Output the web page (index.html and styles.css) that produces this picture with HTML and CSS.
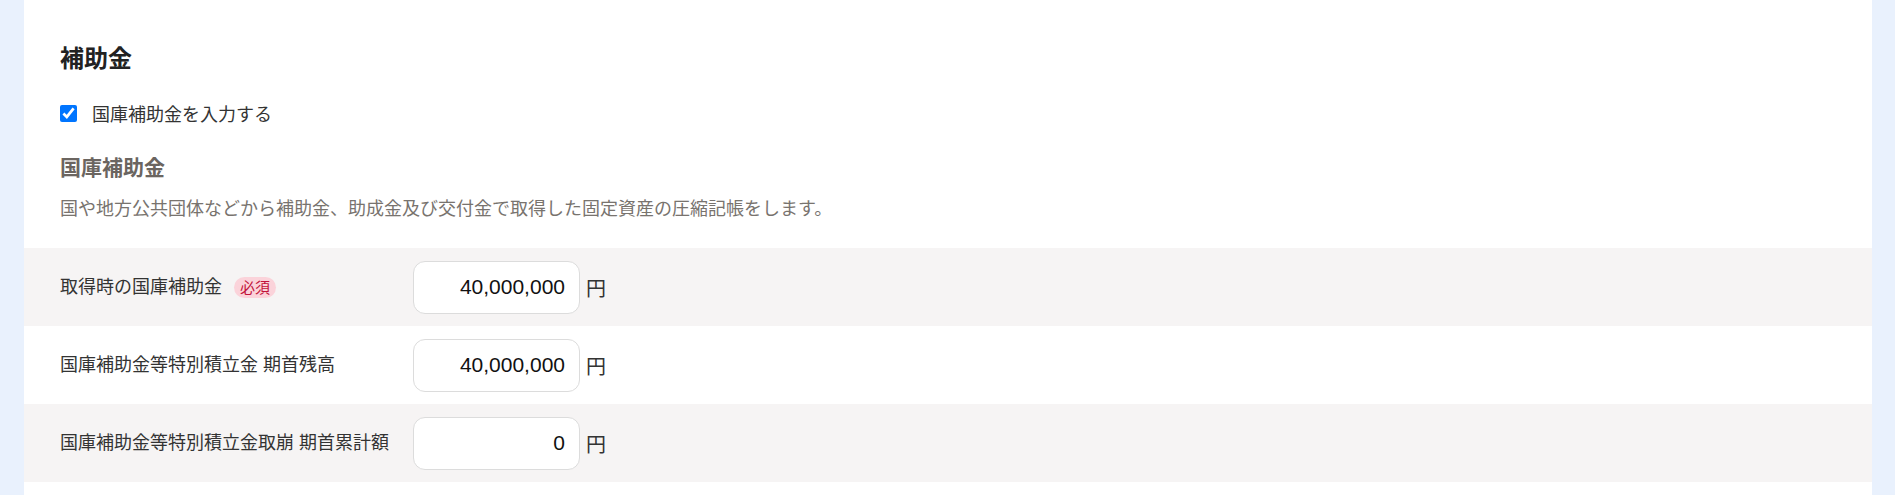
FILE: index.html
```html
<!DOCTYPE html>
<html lang="ja">
    <head>
        <meta charset="utf-8">
        <title>補助金</title>
        <link rel="stylesheet" href="styles.css">
    </head>
    <body>
        <div class="card">
            <div class="section">
                <h2 class="title">補助金</h2>

                <label class="check">
                    <input type="checkbox" checked>
                    <span>国庫補助金を入力する</span>
                </label>

                <h3 class="subtitle">国庫補助金</h3>
                <p class="note">国や地方公共団体などから補助金、助成金及び交付金で取得した固定資産の圧縮記帳をします。</p>
            </div>

            <div class="rows">
                <div class="row">
                    <div class="label">取得時の国庫補助金 <span class="required">必須</span></div>
                    <input class="amount" type="text" value="40,000,000">
                    <span class="unit">円</span>
                </div>
                <div class="row">
                    <div class="label">国庫補助金等特別積立金 期首残高</div>
                    <input class="amount" type="text" value="40,000,000">
                    <span class="unit">円</span>
                </div>
                <div class="row">
                    <div class="label">国庫補助金等特別積立金取崩 期首累計額</div>
                    <input class="amount" type="text" value="0">
                    <span class="unit">円</span>
                </div>
            </div>
        </div>
    </body>
</html>
```

FILE: styles.css
```css
html, body {
    height: 100%;
}

body {
    margin: 0;
    background: #e9f1fd;
    font-family: "Liberation Sans", "Noto Sans CJK JP", sans-serif;
    font-size: 18px;
    color: #333;
    overflow: hidden;
}

.card {
    margin: 0 23px 0 24px;
    min-height: 100%;
    background: #fff;
    padding-top: 41px;
    box-sizing: border-box;
}

.section {
    padding: 0 36px;
}

.title {
    margin: 0;
    font-size: 24px;
    line-height: 36px;
    font-weight: bold;
    color: #222;
}

.check {
    display: flex;
    align-items: center;
    gap: 15px;
    margin-top: 25px;
    line-height: 27px;
}

.check input {
    width: 17px;
    height: 17px;
    margin: 0;
    accent-color: #0075ff;
    position: relative;
    top: -2px;
}

.subtitle {
    margin: 23px 0 0;
    font-size: 21px;
    line-height: 32px;
    font-weight: bold;
    color: #6b6560;
}

.note {
    margin: 12px 0 0;
    line-height: 27px;
    color: #78736e;
}

/* form rows, striped */
.rows {
    margin-top: 25px;
}

.row {
    display: grid;
    grid-template-columns: 347px 167px auto;
    align-items: center;
    column-gap: 6px;
    height: 78px;
    padding: 0 36px;
}

.row:nth-child(odd) {
    background: #f6f4f4;
}

.label {
    display: flex;
    align-items: center;
    line-height: 27px;
}

.required {
    margin-left: 12px;
    padding: 0 6px;
    height: 21px;
    line-height: 21px;
    border-radius: 11px;
    background: #fbd3da;
    color: #c2133b;
    font-size: 15px;
}

.amount {
    box-sizing: border-box;
    width: 167px;
    height: 53px;
    margin: 0;
    padding: 0 14px;
    border: 1px solid #dcdcdc;
    border-radius: 12px;
    background: #fff;
    font-family: "Liberation Sans", sans-serif;
    font-size: 21px;
    color: #111;
    text-align: right;
    outline: none;
}

.unit {
    font-size: 20px;
    color: #333;
}
```
